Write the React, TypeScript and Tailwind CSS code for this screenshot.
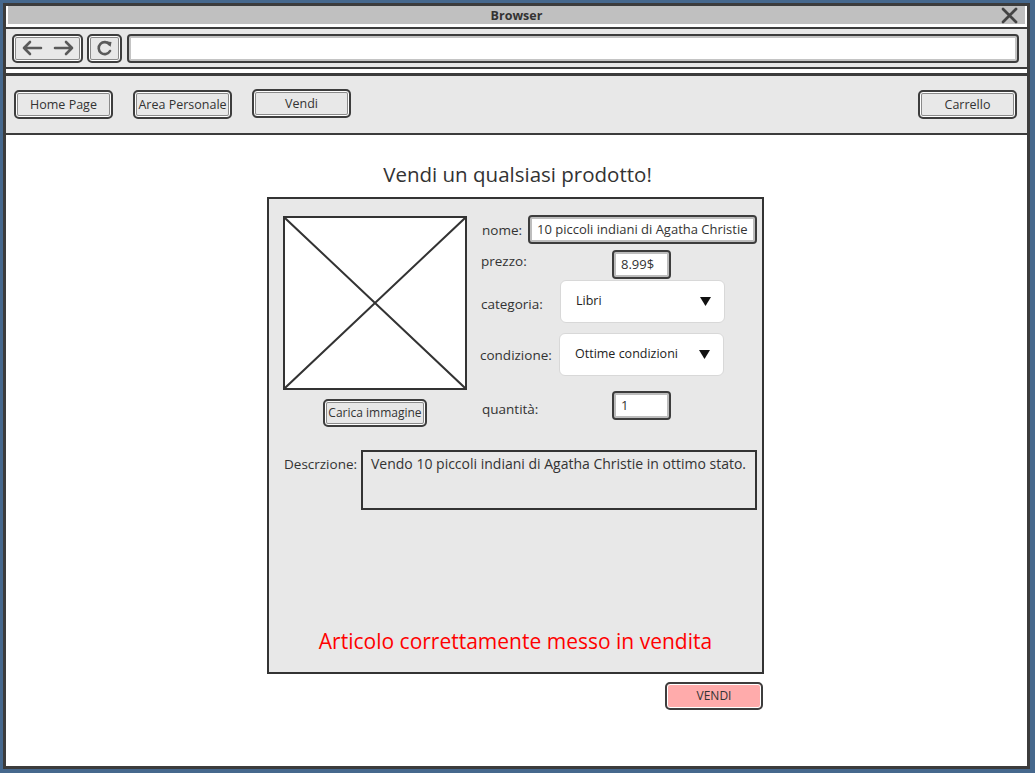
import React from "react";

const FONT = { fontFamily: '"Open Sans", "Noto Sans", "DejaVu Sans", sans-serif' };

function NavButton({ children, className = "" }: { children: React.ReactNode; className?: string }) {
  return (
    <div
      className={
        "h-[29px] w-[99px] rounded-[5px] border-2 border-[#3d3d3d] bg-[#e8e8e8] shadow-[inset_0_0_0_1px_#ffffff,inset_0_0_0_2px_#8a8a8a] flex items-center justify-center pt-[2px] text-[12.5px] text-[#333] " +
        className
      }
    >
      {children}
    </div>
  );
}

function Field({ children, className = "" }: { children?: React.ReactNode; className?: string }) {
  return (
    <div
      className={
        "h-[29px] rounded-[4px] border-2 border-[#3d3d3d] bg-white shadow-[inset_0_0_0_2px_#bdbdbd] flex items-center px-[7px] text-[13px] text-[#333] whitespace-nowrap overflow-hidden " +
        className
      }
    >
      {children}
    </div>
  );
}

function Select({ value }: { value: string }) {
  return (
    <div className="h-[43px] w-[165px] rounded-[6px] border border-[#d8d8d8] bg-white flex items-center justify-between pl-[15px] pr-[13px] text-[12.5px] text-[#222]">
      <span>{value}</span>
      <svg width="11" height="9" viewBox="0 0 11 9">
        <path d="M0 0 L11 0 L5.5 9 Z" fill="#111" />
      </svg>
    </div>
  );
}

export default function App() {
  return (
    <div className="w-[1035px] h-[773px] bg-[#46688d] pt-[3px] pl-[3px] overflow-hidden" style={FONT}>
      <div className="w-[1027px] h-[766px] border-[3px] border-[#3c3c3c] bg-white flex flex-col">
        {/* title bar */}
        <div className="mx-[2px] h-[18px] bg-[#c0c0c0] grid grid-cols-[1fr_auto_1fr] items-center">
          <div />
          <div className="text-[12.5px] font-bold text-[#333] leading-none pt-[3px]">Browser</div>
          <div className="flex justify-end pr-[7px]">
            <svg width="17" height="17" viewBox="0 0 17 17">
              <path d="M2 2 L15 15 M15 2 L2 15" stroke="#444" strokeWidth="2.8" strokeLinecap="round" />
            </svg>
          </div>
        </div>
        <div className="h-[3px]" />
        <div className="h-[2px] bg-[#3c3c3c]" />
        {/* toolbar */}
        <div className="h-[38px] bg-[#e8e8e8] flex items-center pl-[6px] pr-[8px] gap-[4px]">
          <div className="h-[29px] w-[71px] rounded-[5px] border-2 border-[#3d3d3d] shadow-[inset_0_0_0_1px_#ffffff,inset_0_0_0_2px_#8a8a8a] flex items-center justify-center gap-[10px]">
            <svg width="22" height="16" viewBox="0 0 22 16">
              <path d="M20 8 H3 M9 2 L3 8 L9 14" stroke="#5a5a5a" strokeWidth="2.6" fill="none" strokeLinecap="round" strokeLinejoin="round" />
            </svg>
            <svg width="22" height="16" viewBox="0 0 22 16">
              <path d="M2 8 H19 M13 2 L19 8 L13 14" stroke="#5a5a5a" strokeWidth="2.6" fill="none" strokeLinecap="round" strokeLinejoin="round" />
            </svg>
          </div>
          <div className="h-[29px] w-[35px] rounded-[5px] border-2 border-[#3d3d3d] shadow-[inset_0_0_0_1px_#ffffff,inset_0_0_0_2px_#8a8a8a] flex items-center justify-center">
            <svg width="16" height="16" viewBox="0 0 16 16">
              <path d="M12.5 4.5 A6 6 0 1 0 13 11" stroke="#5a5a5a" strokeWidth="2.6" fill="none" strokeLinecap="round" />
              <path d="M9.5 1.5 L14.5 2 L13.5 7 Z" fill="#5a5a5a" />
            </svg>
          </div>
          <div className="ml-[1px] h-[29px] flex-1 rounded-[4px] border-2 border-[#3d3d3d] bg-white shadow-[inset_0_0_0_2px_#c4c4c4]" />
        </div>
        <div className="h-[2px] bg-[#3c3c3c]" />
        <div className="h-[4px]" />
        <div className="h-[3px] bg-[#3c3c3c]" />
        {/* nav */}
        <div className="h-[57px] bg-[#e8e8e8] flex items-center pl-[8px] pr-[10px] gap-[20px]">
          <NavButton>Home Page</NavButton>
          <NavButton>Area Personale</NavButton>
          <NavButton className="-mt-[2px]">Vendi</NavButton>
          <div className="flex-1" />
          <NavButton>Carrello</NavButton>
        </div>
        <div className="h-[2px] bg-[#3c3c3c]" />
        {/* content */}
        <div className="flex-1 flex flex-col">
          <div className="mt-[25px] h-[28px] leading-[28px] text-center text-[20.5px] text-[#333] pl-[2px]">
            Vendi un qualsiasi prodotto!
          </div>
          <div className="ml-[261px] mt-[9px] w-[497px] flex flex-col items-end">
            <div className="w-[497px] h-[477px] border-2 border-[#333] bg-[#e8e8e8] flex flex-col">
              <div className="flex pl-[14px] pt-[17px]">
                <div className="w-[184px] flex flex-col">
                  <div className="w-[184px] h-[174px] border-2 border-[#333] bg-white">
                    <svg width="180" height="170" viewBox="0 0 180 170" className="block">
                      <path d="M0 0 L180 170 M180 0 L0 170" stroke="#333" strokeWidth="2" />
                    </svg>
                  </div>
                  <div className="mt-[9px] self-center h-[28px] w-[104px] rounded-[5px] border-2 border-[#3d3d3d] shadow-[inset_0_0_0_1px_#ffffff,inset_0_0_0_2px_#8a8a8a] flex items-center justify-center text-[12px] text-[#333] whitespace-nowrap">
                    Carica immagine
                  </div>
                </div>
                <div className="ml-[14px] -mt-[1px] flex flex-col text-[13.5px] text-[#333]">
                  <div className="flex items-center h-[29px]">
                    <div className="w-[47px] pl-[1px] pt-[2px]">nome:</div>
                    <Field className="w-[229px]">10 piccoli indiani di Agatha Christie</Field>
                  </div>
                  <div className="flex h-[29px] mt-[6px]">
                    <div className="w-[131px] leading-[22px]">prezzo:</div>
                    <Field className="w-[59px]">8.99$</Field>
                  </div>
                  <div className="flex items-center h-[43px] mt-[1px]">
                    <div className="w-[79px] pt-[6px]">categoria:</div>
                    <Select value="Libri" />
                  </div>
                  <div className="flex items-center h-[43px] mt-[10px]">
                    <div className="w-[79px] -ml-[1px] pt-[2px]">condizione:</div>
                    <Select value="Ottime condizioni" />
                  </div>
                  <div className="flex items-center h-[29px] mt-[15px]">
                    <div className="w-[131px] pt-[8px] pl-[1px]">quantità:</div>
                    <Field className="w-[59px]">1</Field>
                  </div>
                </div>
              </div>
              <div className="flex pl-[15px] mt-[23px] text-[13.5px] text-[#333]">
                <div className="w-[77px] pt-[4px]">Descrzione:</div>
                <div className="w-[396px] h-[60px] border-2 border-[#333] pl-[8px] pt-[2px] leading-[20px] text-[14px] whitespace-nowrap">
                  Vendo 10 piccoli indiani di Agatha Christie in ottimo stato.
                </div>
              </div>
              <div className="mt-[117px] h-[28px] leading-[28px] text-center text-[21px] text-[#ff0000]">
                Articolo correttamente messo in vendita
              </div>
            </div>
            <div className="mt-[8px] mr-[1px] h-[28px] w-[98px] rounded-[5px] border-2 border-[#3d3d3d] bg-[#ffabab] shadow-[inset_0_0_0_1px_#ffffff] flex items-center justify-center text-[12px] text-[#333]">
              VENDI
            </div>
          </div>
        </div>
      </div>
    </div>
  );
}
